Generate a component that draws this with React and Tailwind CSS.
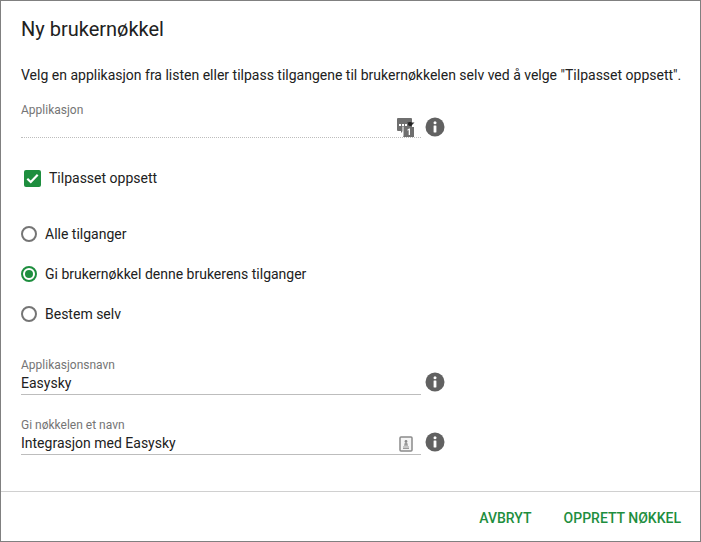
const Info = () => (
  <svg width="20" height="20" viewBox="0 0 20 20" className="shrink-0">
    <circle cx="10" cy="10" r="9.500" fill="#616161" />
    <circle cx="10" cy="5.800" r="1.500" fill="#fff" />
    <rect x="8.600" y="8.600" width="2.800" height="6.800" rx="0.300" fill="#fff" />
  </svg>
);

const Radio = ({ checked, label }) => (
  <div className="flex items-center h-5 gap-[8px]">
    <svg width="16" height="16" viewBox="0 0 16 16" className="shrink-0">
      <circle cx="8" cy="8" r="7" fill="none" stroke={checked ? "#1e8e3e" : "#757575"} strokeWidth="2" />
      {checked && <circle cx="8" cy="8" r="4" fill="#1e8e3e" />}
    </svg>
    <span className="text-[14px] text-[#212121]">{label}</span>
  </div>
);

const Field = ({ label, value, icon }) => (
  <div className="flex items-center">
    <div className="w-[400px]">
      <div className="text-[12px] leading-[14px] text-[#757575]">{label}</div>
      <div className="flex items-start justify-between h-[23px] pt-[1px] border-b border-[#bdbdbd]">
        <span className="text-[14px] text-[#212121] leading-[20px]">{value}</span>
        {icon}
      </div>
    </div>
    <div className="ml-[4px] mt-[10px]"><Info /></div>
  </div>
);

const KeyIcon = () => (
  <svg width="14" height="16" viewBox="0 0 14 16" className="mr-[8px] mt-[3px]">
    <rect x="1" y="1" width="12" height="14" rx="1" fill="#f5f5f5" stroke="#8a8a8a" strokeWidth="1.500" />
    <circle cx="7" cy="5.500" r="1.400" fill="#8a8a8a" />
    <path d="M5.700 7h2.600l.7 2.800H5z" fill="#9a9a9a" />
    <rect x="4" y="10.500" width="6" height="1" fill="#9a9a9a" />
    <rect x="4" y="12" width="6" height="1" fill="#9a9a9a" />
  </svg>
);

const AppIcon = () => (
  <svg width="18" height="19" viewBox="0 0 18 19" className="absolute left-[376px] top-[15px]">
    <path d="M1 0h13a1 1 0 0 1 1 1v11a1 1 0 0 1-1 1H6l-2 2v-2H1a1 1 0 0 1-1-1V1a1 1 0 0 1 1-1z" fill="#6f6f6f" />
    <rect x="2" y="6" width="2" height="2" fill="#fff" />
    <rect x="5" y="6" width="2" height="2" fill="#fff" />
    <rect x="8" y="6" width="2" height="2" fill="#fff" />
    <rect x="6" y="9" width="11" height="10" fill="#6f6f6f" />
    <rect x="5.500" y="8.500" width="1" height="10" fill="#fff" />
    <path d="M10.500 11.500l1.600-1h.9V17h-1.300v-5l-1.200.7z" fill="#fff" />
    <path d="M10 4.500h7.500l-3.700 3.700z" fill="#333" />
    <circle cx="13" cy="6" r="2" fill="#222" />
  </svg>
);

export default function App() {
  return (
    <div className="w-[701px] h-[542px] bg-white border border-[#808080] flex flex-col font-['Roboto',sans-serif] text-[#212121]">
      <div className="flex-1 pl-[20px] pr-[19px] pt-[16px]">
        <h1 className="text-[20px] leading-[24px] font-normal">Ny brukernøkkel</h1>
        <p className="mt-[24px] text-[14px] leading-[20px] whitespace-nowrap">
          Velg en applikasjon fra listen eller tilpass tilgangene til brukernøkkelen selv ved å velge "Tilpasset oppsett".
        </p>
        <div className="relative mt-[18px] h-[36px]">
          <div className="text-[12px] leading-[14px] text-[#757575]">Applikasjon</div>
          <div className="w-[400px] h-[13px] border-b border-dotted border-[#bdbdbd] mt-[8px]" />
          <AppIcon />
          <div className="absolute left-[404px] top-[14px]"><Info /></div>
        </div>
        <div className="flex items-center mt-[29px] ml-[3px] gap-[8px] h-5">
          <div className="w-[17px] h-[17px] rounded-[2px] bg-[#1e8e3e] flex items-center justify-center">
            <svg width="13" height="11" viewBox="0 0 12 10">
              <path d="M1.200 5.200l3.200 3L10.800 1.500" fill="none" stroke="#fff" strokeWidth="2" />
            </svg>
          </div>
          <span className="text-[14px] text-[#212121]">Tilpasset oppsett</span>
        </div>
        <div className="flex flex-col gap-[20px] mt-[36px]">
          <Radio label="Alle tilganger" />
          <Radio checked label="Gi brukernøkkel denne brukerens tilganger" />
          <Radio label="Bestem selv" />
        </div>
        <div className="flex flex-col gap-[23px] mt-[34px]">
          <Field label="Applikasjonsnavn" value="Easysky" />
          <Field label="Gi nøkkelen et navn" value="Integrasjon med Easysky" icon={<KeyIcon />} />
        </div>
      </div>
      <div className="h-[50px] border-t border-[#d0d0d0] flex items-center justify-end pr-[19px] pt-[4px] gap-[32px] text-[14px] font-medium text-[#1e8e3e]">
        <span>AVBRYT</span>
        <span>OPPRETT NØKKEL</span>
      </div>
    </div>
  );
}
